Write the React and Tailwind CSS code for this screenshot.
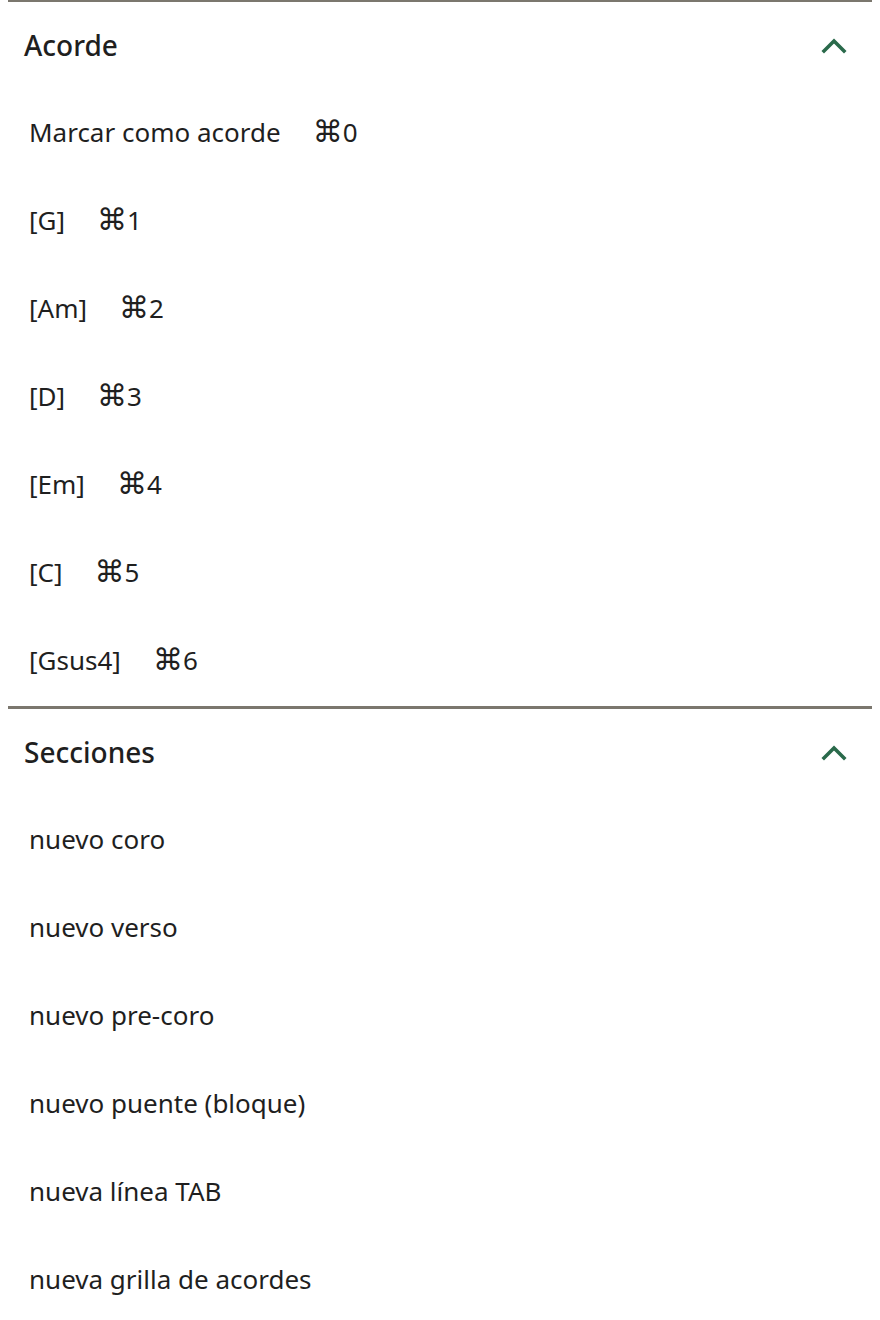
const sections = [
  {
    title: "Acorde",
    items: [
      { label: "Marcar como acorde", key: "0" },
      { label: "[G]", key: "1" },
      { label: "[Am]", key: "2" },
      { label: "[D]", key: "3" },
      { label: "[Em]", key: "4" },
      { label: "[C]", key: "5" },
      { label: "[Gsus4]", key: "6" },
    ],
  },
  {
    title: "Secciones",
    items: [
      { label: "nuevo coro" },
      { label: "nuevo verso" },
      { label: "nuevo pre-coro" },
      { label: "nuevo puente (bloque)" },
      { label: "nueva línea TAB" },
      { label: "nueva grilla de acordes" },
    ],
  },
];

function Chevron() {
  return (
    <svg width="28" height="18" viewBox="0 0 28 18" fill="none" className="text-[#2a6a4b]">
      <path d="M4 15 14 5l10 10" stroke="currentColor" strokeWidth="3.6" strokeLinecap="square" strokeLinejoin="miter" />
    </svg>
  );
}

export default function App() {
  return (
    <div
      className="min-h-screen bg-white px-2 text-[#1f1f1f]"
      style={{ fontFamily: "'Noto Sans', sans-serif" }}
    >
      {sections.map((s) => (
        <section key={s.title} className="border-t-[3px] border-[#7b776e] first:-mt-px">
          <div className="flex h-[86px] items-center justify-between pl-4 pr-6">
            <h2 className="text-[28px] font-medium">{s.title}</h2>
            <Chevron />
          </div>
          <ul className="pb-0.5">
            {s.items.map((it) => (
              <li key={it.label} className="flex h-[88px] items-center gap-8 pl-[21px] text-[26px]">
                <span>{it.label}</span>
                {it.key && (
                  <span className="flex items-center">
                    <span className="text-[30px] leading-none" style={{ fontFamily: "'DejaVu Sans', sans-serif" }}>
                      ⌘
                    </span>
                    <span>{it.key}</span>
                  </span>
                )}
              </li>
            ))}
          </ul>
        </section>
      ))}
    </div>
  );
}
